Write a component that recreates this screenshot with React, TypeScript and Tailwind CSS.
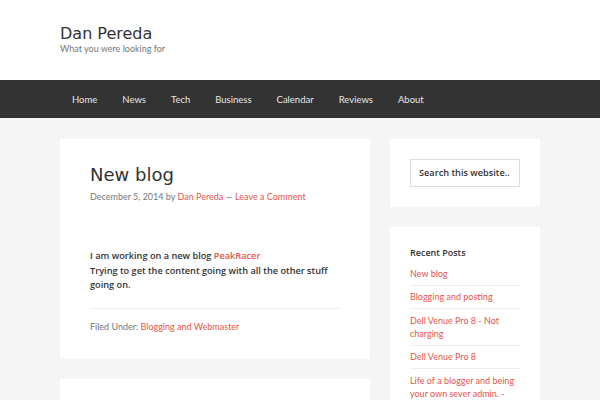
import React from 'react';

const navItems = ['Home', 'News', 'Tech', 'Business', 'Calendar', 'Reviews', 'About'];

const recentPosts = [
  'New blog',
  'Blogging and posting',
  'Dell Venue Pro 8 - Not charging',
  'Dell Venue Pro 8',
  'Life of a blogger and being your own sever admin. -',
];

const App: React.FC = () => {
  return (
    <div className="min-h-[400px] bg-[#f5f5f5] font-['Lato',sans-serif] text-[#333]">
      <header className="h-[80px] bg-white px-[60px] pt-[25px]">
        <h1 className="font-['DejaVu_Sans',sans-serif] text-[16px] leading-[18px] text-[#333]">Dan Pereda</h1>
        <p className="text-[9px] leading-[11px] text-[#777]">What you were looking for</p>
      </header>

      <nav className="flex h-[38px] items-center bg-[#333] px-[59.5px] pt-[3px]">
        {navItems.map((item) => (
          <a key={item} className="px-[12.5px] text-[9.5px] text-[#e6e6e6]">
            {item}
          </a>
        ))}
      </nav>

      <div className="flex gap-[20px] px-[60px] pt-[21px]">
        <main className="flex w-[310px] flex-col gap-[20px]">
          <article className="bg-white px-[30px] pb-[26px] pt-[25px]">
            <h2 className="font-['DejaVu_Sans',sans-serif] text-[18px] leading-[22px] text-[#333]">New blog</h2>
            <p className="mt-[5px] text-[9px] leading-[12px] text-[#777]">
              December 5, 2014 by <span className="text-[#e5554e]">Dan Pereda</span> —{' '}
              <span className="text-[#e5554e]">Leave a Comment</span>
            </p>
            <div className="mt-[46px] font-['Open_Sans',sans-serif] text-[9.2px] font-semibold leading-[14.5px] text-[#333]">
              <p>
                I am working on a new blog <span className="text-[#e5554e]">PeakRacer</span>
              </p>
              <p>Trying to get the content going with all the other stuff going on.</p>
            </div>
            <div className="mt-[15px] border-t border-[#eee] pt-[12px] text-[9px] leading-[12px] text-[#777]">
              Filed Under: <span className="text-[#e5554e]">Blogging and Webmaster</span>
            </div>
          </article>
          <article className="h-[60px] bg-white" />
        </main>

        <aside className="flex w-[150px] flex-col gap-[20px]">
          <section className="bg-white p-[20px]">
            <div className="flex h-[28px] items-center border border-[#ddd] px-[8px] font-['Open_Sans',sans-serif] text-[9.2px] font-semibold text-[#333]">
              Search this website..
            </div>
          </section>
          <section className="h-[200px] bg-white px-[20px] pt-[20px]">
            <h3 className="font-['Open_Sans',sans-serif] text-[9px] font-semibold leading-[12px] text-[#333]">
              Recent Posts
            </h3>
            <ul className="mt-[3px]">
              {recentPosts.map((post) => (
                <li
                  key={post}
                  className="border-b border-[#eee] pb-[4.75px] pt-[4.75px] text-[9px] leading-[13px] text-[#e5554e]"
                >
                  {post}
                </li>
              ))}
            </ul>
          </section>
        </aside>
      </div>
    </div>
  );
};

export default App;
